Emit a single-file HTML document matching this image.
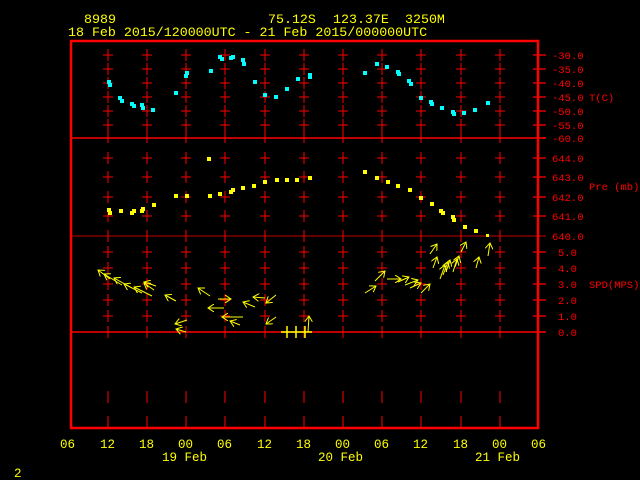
<!DOCTYPE html>
<html><head><meta charset="utf-8"><style>
html,body{margin:0;padding:0;background:#000;}
svg{display:block}
text{font-family:"Liberation Mono",monospace;}
</style></head><body>
<svg width="640" height="480" viewBox="0 0 640 480" xmlns="http://www.w3.org/2000/svg">
<defs>
<marker id="ah" markerWidth="8" markerHeight="8" refX="6" refY="4" orient="auto" markerUnits="userSpaceOnUse">
<path d="M0,0 L6,4 L0,8" fill="none" stroke="#ffff00" stroke-width="1"/>
</marker>
<g id="col" stroke="#ff0000" stroke-width="1">
<path d="M0,49v12M-5,55h10 M0,63v12M-5,69h10 M0,77v12M-5,83h10 M0,91v12M-5,97h10 M0,105v12M-5,111h10 M0,119v12M-5,125h10"/>
<path d="M0,131v12 M0,152v12M-5,158h10 M0,171v12M-5,177h10 M0,191v12M-5,197h10 M0,210v12M-5,216h10 M0,230v12"/>
<path d="M0,246v12M-5,252h10 M0,262v12M-5,268h10 M0,278v12M-5,284h10 M0,294v12M-5,300h10 M0,310v12M-5,316h10 M0,326v12"/>
<path d="M0,391v12 M0,416v12"/>
</g>
</defs>
<rect x="71" y="41" width="467" height="387" fill="none" stroke="#ff0000" stroke-width="2.5"/>
<g stroke="#ff0000" stroke-width="1.5">
<line x1="71" y1="138" x2="546" y2="138"/>
<line x1="71" y1="332" x2="546" y2="332"/>
</g>
<line x1="71" y1="236" x2="546" y2="236" stroke="#ff0000" stroke-width="0.8"/>
<use href="#col" x="108"/><use href="#col" x="147"/><use href="#col" x="186"/><use href="#col" x="225"/>
<use href="#col" x="265"/><use href="#col" x="304"/><use href="#col" x="343"/><use href="#col" x="382"/>
<use href="#col" x="421"/><use href="#col" x="461"/><use href="#col" x="500"/>
<path stroke="#ff0000" stroke-width="1.2" d="M533,55h13M533,69h13M533,83h13M533,97h13M533,111h13M533,125h13M533,158h13M533,177h13M533,197h13M533,216h13M533,252h13M533,268h13M533,284h13M533,300h13M533,316h13"/>
<g fill="#ff0000" font-size="10.5">
<text x="552" y="59">-30.0</text><text x="552" y="73">-35.0</text><text x="552" y="87">-40.0</text>
<text x="552" y="101">-45.0</text><text x="552" y="115">-50.0</text><text x="552" y="129">-55.0</text>
<text x="552" y="142">-60.0</text>
<text x="589" y="101">T(C)</text>
<text x="552" y="162">644.0</text><text x="552" y="181">643.0</text><text x="552" y="201">642.0</text>
<text x="552" y="220">641.0</text><text x="552" y="240">640.0</text>
<text x="589" y="190">Pre (mb)</text>
<text x="558" y="256">5.0</text><text x="558" y="272">4.0</text><text x="558" y="288">3.0</text>
<text x="558" y="304">2.0</text><text x="558" y="320">1.0</text><text x="558" y="336">0.0</text>
<text x="589" y="288">SPD(MPS)</text>
</g>
<g fill="#ffff00" font-size="13.3">
<text x="84" y="23">8989</text>
<text x="268" y="23">75.12S</text>
<text x="333" y="23">123.37E</text>
<text x="405" y="23">3250M</text>
<text x="68" y="36">18 Feb 2015/120000UTC - 21 Feb 2015/000000UTC</text>
<g font-size="12.5">
<text x="60" y="448">06</text><text x="100" y="448">12</text><text x="139" y="448">18</text><text x="178" y="448">00</text>
<text x="217" y="448">06</text><text x="257" y="448">12</text><text x="296" y="448">18</text><text x="335" y="448">00</text>
<text x="374" y="448">06</text><text x="413" y="448">12</text><text x="453" y="448">18</text><text x="492" y="448">00</text>
<text x="531" y="448">06</text>
<text x="162" y="461">19 Feb</text><text x="318" y="461">20 Feb</text><text x="475" y="461">21 Feb</text>
<text x="14" y="477">2</text>
</g>
</g>
<g fill="#00ffff">
<rect x="107" y="80" width="4" height="4"/><rect x="108" y="83" width="4" height="4"/>
<rect x="118" y="96" width="4" height="4"/><rect x="120" y="99" width="4" height="4"/>
<rect x="130" y="102" width="4" height="4"/><rect x="132" y="104" width="4" height="4"/>
<rect x="140" y="103" width="4" height="4"/><rect x="141" y="106" width="4" height="4"/>
<rect x="151" y="108" width="4" height="4"/><rect x="174" y="91" width="4" height="4"/>
<rect x="184" y="74" width="4" height="4"/><rect x="185" y="71" width="4" height="4"/>
<rect x="209" y="69" width="4" height="4"/><rect x="218" y="55" width="4" height="4"/>
<rect x="220" y="57" width="4" height="4"/><rect x="229" y="56" width="4" height="4"/>
<rect x="231" y="55" width="4" height="4"/><rect x="241" y="58" width="4" height="4"/>
<rect x="242" y="62" width="4" height="4"/><rect x="253" y="80" width="4" height="4"/>
<rect x="263" y="93" width="4" height="4"/><rect x="274" y="95" width="4" height="4"/>
<rect x="285" y="87" width="4" height="4"/><rect x="296" y="77" width="4" height="4"/>
<rect x="308" y="73" width="4" height="4"/><rect x="308" y="75" width="4" height="4"/>
<rect x="363" y="71" width="4" height="4"/><rect x="375" y="62" width="4" height="4"/>
<rect x="385" y="65" width="4" height="4"/><rect x="396" y="70" width="4" height="4"/>
<rect x="397" y="72" width="4" height="4"/><rect x="407" y="79" width="4" height="4"/>
<rect x="409" y="82" width="4" height="4"/><rect x="419" y="96" width="4" height="4"/>
<rect x="429" y="100" width="4" height="4"/><rect x="430" y="102" width="4" height="4"/>
<rect x="440" y="106" width="4" height="4"/><rect x="451" y="110" width="4" height="4"/>
<rect x="452" y="112" width="4" height="4"/><rect x="462" y="111" width="4" height="4"/>
<rect x="473" y="108" width="4" height="4"/><rect x="486" y="101" width="4" height="4"/>
</g>
<g fill="#ffff00">
<rect x="107" y="208" width="4" height="4"/><rect x="108" y="211" width="4" height="4"/>
<rect x="119" y="209" width="4" height="4"/><rect x="130" y="211" width="4" height="4"/>
<rect x="132" y="209" width="4" height="4"/><rect x="140" y="209" width="4" height="4"/>
<rect x="141" y="207" width="4" height="4"/><rect x="152" y="203" width="4" height="4"/>
<rect x="174" y="194" width="4" height="4"/><rect x="185" y="194" width="4" height="4"/>
<rect x="207" y="157" width="4" height="4"/><rect x="208" y="194" width="4" height="4"/>
<rect x="218" y="192" width="4" height="4"/><rect x="229" y="190" width="4" height="4"/>
<rect x="231" y="188" width="4" height="4"/><rect x="241" y="186" width="4" height="4"/>
<rect x="252" y="184" width="4" height="4"/><rect x="263" y="180" width="4" height="4"/>
<rect x="275" y="178" width="4" height="4"/><rect x="285" y="178" width="4" height="4"/>
<rect x="295" y="178" width="4" height="4"/><rect x="308" y="176" width="4" height="4"/>
<rect x="363" y="170" width="4" height="4"/><rect x="375" y="176" width="4" height="4"/>
<rect x="386" y="180" width="4" height="4"/><rect x="396" y="184" width="4" height="4"/>
<rect x="408" y="188" width="4" height="4"/><rect x="419" y="196" width="4" height="4"/>
<rect x="430" y="202" width="4" height="4"/><rect x="439" y="209" width="4" height="4"/>
<rect x="441" y="211" width="4" height="4"/><rect x="451" y="215" width="4" height="4"/>
<rect x="452" y="218" width="4" height="4"/><rect x="463" y="225" width="4" height="4"/>
<rect x="474" y="229" width="4" height="4"/><rect x="486" y="234" width="3" height="3"/>
</g>
<g stroke="#ffff00" stroke-width="1" fill="none" marker-end="url(#ah)">
<line x1="110" y1="279" x2="98" y2="270"/>
<line x1="122" y1="285" x2="104" y2="274"/>
<line x1="132" y1="288" x2="114" y2="278"/>
<line x1="142" y1="293" x2="124" y2="284"/>
<line x1="152" y1="296" x2="134" y2="287"/>
<line x1="154" y1="290" x2="144" y2="283"/>
<line x1="156" y1="286" x2="144" y2="282"/>
<line x1="176" y1="301" x2="165" y2="295"/>
<line x1="210" y1="296" x2="198" y2="288"/>
<line x1="218" y1="299" x2="231" y2="299"/>
<line x1="265" y1="298" x2="253" y2="297"/>
<line x1="276" y1="295" x2="266" y2="303"/>
<line x1="255" y1="307" x2="243" y2="302"/>
<line x1="224" y1="308" x2="208" y2="308"/>
<line x1="243" y1="317" x2="222" y2="317"/>
<line x1="240" y1="325" x2="230" y2="321"/>
<line x1="187" y1="320" x2="175" y2="324"/>
<line x1="186" y1="332" x2="176" y2="329"/>
<line x1="276" y1="317" x2="266" y2="324"/>
<line x1="308" y1="332" x2="309" y2="316"/>
<line x1="365" y1="293" x2="376" y2="286"/>
<line x1="375" y1="281" x2="385" y2="271"/>
<line x1="387" y1="279" x2="401" y2="279"/>
<line x1="398" y1="282" x2="409" y2="277"/>
<line x1="405" y1="285" x2="418" y2="280"/>
<line x1="410" y1="288" x2="421" y2="283"/>
<line x1="421" y1="293" x2="430" y2="284"/>
<line x1="430" y1="254" x2="437" y2="244"/>
<line x1="433" y1="268" x2="437" y2="257"/>
<line x1="440" y1="279" x2="445" y2="265"/>
<line x1="443" y1="275" x2="448" y2="262"/>
<line x1="446" y1="272" x2="450" y2="260"/>
<line x1="453" y1="272" x2="457" y2="259"/>
<line x1="455" y1="267" x2="459" y2="256"/>
<line x1="461" y1="252" x2="466" y2="242"/>
<line x1="476" y1="268" x2="479" y2="257"/>
<line x1="488" y1="256" x2="490" y2="243"/>
</g>
<g stroke="#ffff00" stroke-width="1.5">
<line x1="281" y1="332" x2="312" y2="332"/>
<line x1="287" y1="326" x2="287" y2="338"/>
<line x1="296" y1="326" x2="296" y2="338"/>
<line x1="305" y1="326" x2="305" y2="338"/>
</g>
</svg>
</body></html>
